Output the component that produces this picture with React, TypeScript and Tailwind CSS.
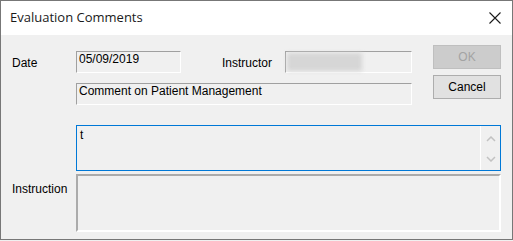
export default function App() {
  return (
    <div className="w-[513px] h-[241px] bg-[#f0f0f0] font-['Liberation_Sans',Arial,sans-serif] text-[12px] text-black">
      <div className="h-[240px] border border-[#777777] flex flex-col bg-[#f0f0f0]">
        {/* title bar */}
        <div className="h-[34px] bg-white flex items-center justify-between pl-[9px] pr-[11px]">
          <span className="font-['Open_Sans',sans-serif] text-[13px] text-[#1a1a1a]">Evaluation Comments</span>
          <svg width="12" height="12" viewBox="0 0 12 12" className="text-[#1a1a1a]">
            <path d="M0.5 0.5 L11.5 11.5 M11.5 0.5 L0.5 11.5" stroke="currentColor" strokeWidth="1.1" fill="none" />
          </svg>
        </div>

        <div className="flex flex-col pl-[11px] pr-[11px]">
          <div className="flex pt-[10px]">
            <div className="flex flex-col mt-[6px]">
              <div className="flex items-center">
                <span className="w-[64px] pt-[1px]">Date</span>
                <div className="w-[105px] h-[22px] border-t border-l border-[#a0a0a0] border-b border-r border-b-white border-r-white pl-[2px] leading-[12px] pt-[1px]">
                  05/09/2019
                </div>
                <span className="ml-[41px] w-[63px] pt-[1px]">Instructor</span>
                <div className="w-[127px] h-[22px] border-t border-l border-[#a0a0a0] border-b border-r border-b-white border-r-white p-[1px]">
                  <div className="w-[75px] h-full bg-[#d6d6d6] blur-[2px]" />
                </div>
              </div>
              <div className="mt-[10px] pl-[64px]">
                <div className="w-[336px] h-[22px] border-t border-l border-[#a0a0a0] border-b border-r border-b-white border-r-white pl-[2px] leading-[12px] pt-[1px]">
                  Comment on Patient Management
                </div>
              </div>
            </div>
            <div className="ml-[21px] flex flex-col gap-[6px]">
              <button className="w-[68px] h-[24px] bg-[#cccccc] border border-[#bfbfbf] text-[#a3a3a3] text-[12px]">OK</button>
              <button className="w-[68px] h-[24px] bg-[#e1e1e1] border border-[#adadad] text-[12px]">Cancel</button>
            </div>
          </div>

          <div className="mt-[20px] pl-[64px]">
            <div className="h-[46px] border border-[#0078d7] flex">
              <div className="flex-1 pl-[3px] pt-[2px] leading-[14px]">t</div>
              <div className="w-[20px] border-l border-white flex flex-col items-center justify-between pt-[10px] pb-[8px] text-[#c2c2c2]">
                <svg width="10" height="6" viewBox="0 0 10 6">
                  <path d="M1 5 L5 1 L9 5" stroke="currentColor" strokeWidth="1.5" fill="none" />
                </svg>
                <svg width="10" height="6" viewBox="0 0 10 6">
                  <path d="M1 1 L5 5 L9 1" stroke="currentColor" strokeWidth="1.5" fill="none" />
                </svg>
              </div>
            </div>
          </div>

          <div className="mt-[3px] flex items-start">
            <span className="w-[64px] mt-[6px]">Instruction</span>
            <div className="flex-1 h-[58px] border-t-2 border-l-2 border-[#ababab] border-b-2 border-r-2 border-b-white border-r-white" />
          </div>
        </div>
      </div>
    </div>
  );
}
